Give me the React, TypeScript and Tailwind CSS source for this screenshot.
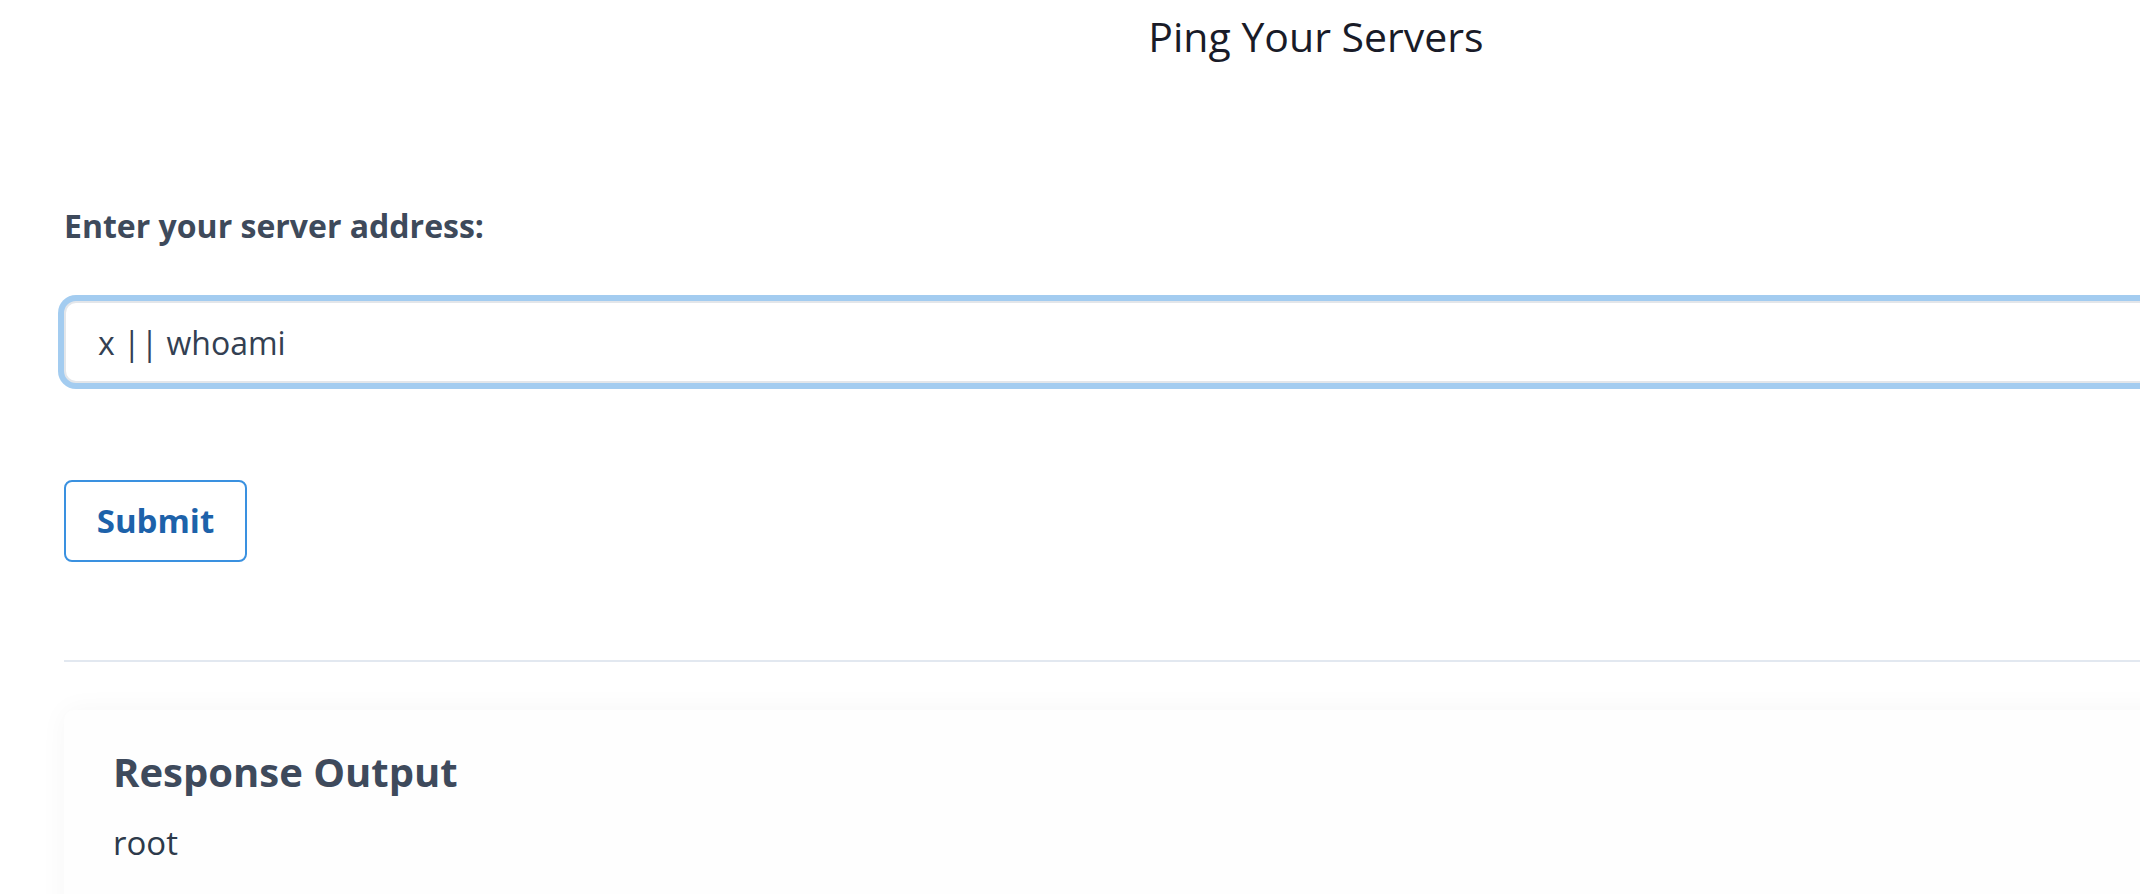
import { useState } from 'react';

export default function App() {
  const [address, setAddress] = useState('x || whoami');

  return (
    <div className="w-screen min-h-screen overflow-hidden bg-white" style={{ fontFamily: '"Segoe UI", "Open Sans", sans-serif' }}>
      <div className="w-[2504px] ml-[64px]">
        <h1 className="text-center text-[41px] leading-[60px] pt-[6px] text-[#191b28] font-normal">Ping Your Servers</h1>

        <form className="mt-[138px]" onSubmit={e => e.preventDefault()}>
          <label className="block text-[32px] leading-[44px] font-bold text-[#3e4a5b]">
            Enter your server address:
          </label>
          <input
            type="text"
            value={address}
            onChange={e => setAddress(e.target.value)}
            className="mt-[53px] block w-full h-[82px] px-[32px] rounded-[12px] border-2 border-[#e3e6ea] bg-white text-[32px] text-[#334052] outline-none shadow-[0_0_0_6px_#a3ccf0]"
          />
          <button
            type="submit"
            className="mt-[97px] block w-[183px] h-[82px] rounded-[8px] border-2 border-[#3a91e0] bg-white text-[33px] font-bold text-[#1d62aa]"
          >
            Submit
          </button>
        </form>

        <hr className="mt-[98px] border-0 h-[2px] bg-[#e2e8f0]" />

        <div className="mt-[48px] min-h-[260px] rounded-tl-[10px] bg-[#fefefe] shadow-[0_0_28px_rgba(0,0,0,0.04)] pl-[49px] pr-[40px] pt-[34px] pb-[40px]">
          <h2 className="text-[40px] leading-[56px] font-bold text-[#3e4a5c]">Response Output</h2>
          <p className="mt-[21px] text-[33px] leading-[44px] text-[#2d3a4b]">root</p>
        </div>
      </div>
    </div>
  );
}
